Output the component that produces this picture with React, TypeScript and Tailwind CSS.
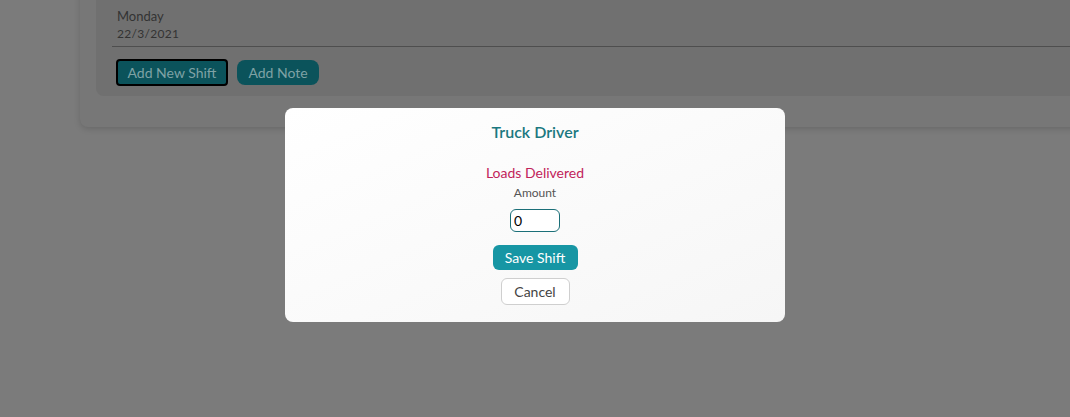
export default function App() {
  return (
    <div
      className="relative h-[417px] w-full overflow-hidden bg-[#7b7b7b]"
      style={{ fontFamily: "Lato, 'Noto Sans', sans-serif" }}
    >
      {/* Background page */}
      <div className="ml-[80px] mr-[-20px] mt-[-20px] rounded-lg bg-[#777777] pb-[31px] shadow-[0_2px_6px_rgba(0,0,0,0.15)]">
        <div className="ml-4 rounded-lg bg-[#707070] pb-[10px] pl-4 pt-[28px]">
          <div className="pl-[5px] text-[13px] leading-[17px] text-[#333]">Monday</div>
          <div className="pl-[5px] text-[12px] leading-[17px] tracking-wide text-[#333]">22/3/2021</div>
          <div className="mt-[4px] border-t border-[#4e4e4e]" />
          <div className="mt-[12px] flex items-center gap-[9px] pl-1">
            <button className="h-[27px] w-[112px] rounded-[4px] border-2 border-black bg-[#0b535b] text-[14px] text-[#7fa2a5]">
              Add New Shift
            </button>
            <button className="h-[25px] w-[82px] rounded-lg bg-[#0b535b] text-[14px] text-[#7fa2a5]">
              Add Note
            </button>
          </div>
        </div>
      </div>

      {/* Modal */}
      <div className="absolute left-[285px] top-[108px] flex h-[214px] w-[500px] flex-col items-center rounded-lg bg-gradient-to-br from-white to-[#f6f6f6] pt-[14px]">
        <h2 className="text-[16px] font-semibold leading-[20px] text-[#1b7880]">Truck Driver</h2>
        <div className="mt-[22px] text-[14px] leading-[18px] text-[#c1235a]">Loads Delivered</div>
        <div className="mt-[3px] text-[12px] leading-[16px] text-[#555]">Amount</div>
        <input
          defaultValue="0"
          className="mt-[8px] h-[23px] w-[50px] rounded-md border border-[#1b6f78] bg-white px-[3px] text-[14px] text-black outline-none"
        />
        <button className="mt-[13px] h-[25px] w-[85px] rounded-md bg-[#1796a4] text-[14px] text-white">
          Save Shift
        </button>
        <button className="mt-[8px] h-[27px] w-[69px] rounded-md border border-[#cfcfcf] bg-white text-[14px] text-[#444]">
          Cancel
        </button>
      </div>
    </div>
  );
}
